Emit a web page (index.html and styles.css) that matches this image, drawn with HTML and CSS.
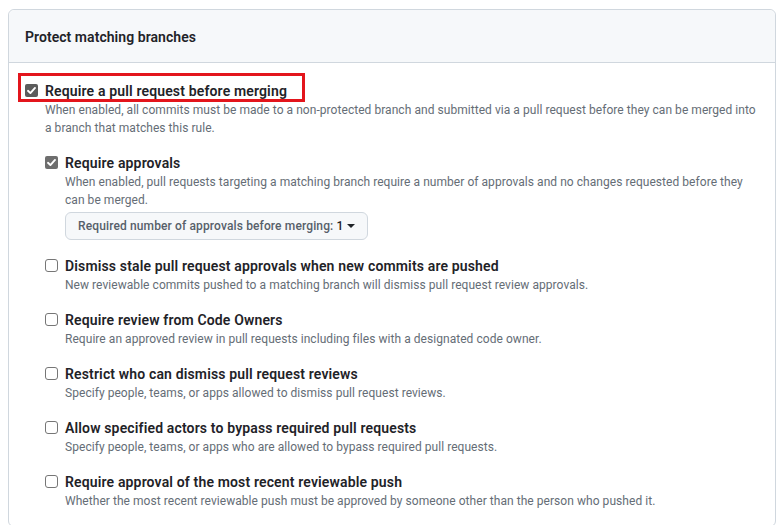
FILE: index.html
```
<!DOCTYPE html>
<html lang="en">
<head>
<meta charset="utf-8">
<title>Protect matching branches</title>
<link rel="stylesheet" href="styles.css">
</head>
<body>
<div class="box">
  <div class="box-header">
    <h3 class="box-title">Protect matching branches</h3>
  </div>
  <div class="box-body">
    <div class="check">
      <label class="check-label highlighted">
        <span class="cb cb-on"><svg viewBox="0 0 13 13" width="13" height="13"><rect x="0" y="0" width="13" height="13" rx="2" fill="#5c5c5c"/><path d="M3 6.8 L5.4 9.1 L10 3.9" fill="none" stroke="#fff" stroke-width="1.9" stroke-linecap="round" stroke-linejoin="round"/></svg></span>
        Require a pull request before merging
      </label>
      <p class="note">When enabled, all commits must be made to a non-protected branch and submitted via a pull request before they can be merged into a branch that matches this rule.</p>

      <div class="sub">
        <div class="check">
          <label class="check-label">
            <span class="cb cb-on"><svg viewBox="0 0 13 13" width="13" height="13"><rect x="0" y="0" width="13" height="13" rx="2" fill="#6e6e6e"/><path d="M3 6.8 L5.4 9.1 L10 3.9" fill="none" stroke="#fff" stroke-width="1.9" stroke-linecap="round" stroke-linejoin="round"/></svg></span>
            Require approvals
          </label>
          <p class="note">When enabled, pull requests targeting a matching branch require a number of approvals and no changes requested before they can be merged.</p>
          <button class="select-btn" type="button">Required number of approvals before merging: <span class="select-value">1</span><span class="caret"></span></button>
        </div>

        <div class="check">
          <label class="check-label"><span class="cb cb-off"></span>Dismiss stale pull request approvals when new commits are pushed</label>
          <p class="note">New reviewable commits pushed to a matching branch will dismiss pull request review approvals.</p>
        </div>

        <div class="check">
          <label class="check-label"><span class="cb cb-off"></span>Require review from Code Owners</label>
          <p class="note">Require an approved review in pull requests including files with a designated code owner.</p>
        </div>

        <div class="check">
          <label class="check-label"><span class="cb cb-off"></span>Restrict who can dismiss pull request reviews</label>
          <p class="note">Specify people, teams, or apps allowed to dismiss pull request reviews.</p>
        </div>

        <div class="check">
          <label class="check-label"><span class="cb cb-off"></span>Allow specified actors to bypass required pull requests</label>
          <p class="note">Specify people, teams, or apps who are allowed to bypass required pull requests.</p>
        </div>

        <div class="check">
          <label class="check-label"><span class="cb cb-off"></span>Require approval of the most recent reviewable push</label>
          <p class="note">Whether the most recent reviewable push must be approved by someone other than the person who pushed it.</p>
        </div>
      </div>
    </div>
  </div>
</div>
</body>
</html>
```
FILE: styles.css
```
html, body {
  margin: 0;
  padding: 0;
  background: #ffffff;
}

body {
  font-family: Roboto, "Liberation Sans", sans-serif;
  color: #1f2328;
  padding: 9px 3px 0 8px;
}

.box {
  width: 768px;
  box-sizing: border-box;
  border: 1px solid #d0d7de;
  border-radius: 6px;
  background: #ffffff;
}

.box-header {
  height: 53px;
  box-sizing: border-box;
  background: #f6f8fa;
  border-bottom: 1px solid #d0d7de;
  border-radius: 6px 6px 0 0;
  padding: 2px 16px 0 16px;
  display: flex;
  align-items: center;
}

.box-title {
  margin: 0;
  font-size: 14px;
  font-weight: 600;
  letter-spacing: 0.05px;
  color: #1f2328;
}

.box-body {
  padding: 18px 16px 16px 16px;
}

.check {
  padding-left: 20px;
}

.sub {
  margin-top: 16px;
}

.sub .check + .check {
  margin-top: 16px;
}

.check-label {
  position: relative;
  display: inline-block;
  font-size: 14px;
  font-weight: 600;
  line-height: 20px;
  letter-spacing: 0.15px;
  color: #1f2328;
}

.cb {
  position: absolute;
  left: -20px;
  top: 3px;
  width: 13px;
  height: 13px;
  box-sizing: border-box;
}

.cb svg {
  display: block;
}

.cb-off {
  border: 1px solid #767676;
  border-radius: 3px;
  background: #ffffff;
}

.highlighted::after {
  content: "";
  position: absolute;
  left: -27px;
  top: -8px;
  width: 287px;
  height: 29px;
  box-sizing: border-box;
  border: 3px solid #e3151c;
}

.note {
  margin: 0;
  font-size: 12px;
  line-height: 18px;
  letter-spacing: 0.05px;
  color: #656d76;
}

.select-btn {
  margin-top: 3px;
  height: 28px;
  box-sizing: border-box;
  padding: 0 12px;
  display: inline-flex;
  align-items: center;
  background: #f6f8fa;
  border: 1px solid #d0d7de;
  border-radius: 6px;
  font-family: Roboto, "Liberation Sans", sans-serif;
  font-size: 12px;
  font-weight: 500;
  letter-spacing: 0.13px;
  color: #57606a;
  white-space: pre;
}

.select-value {
  color: #1f2328;
}

.caret {
  display: inline-block;
  margin-left: 4px;
  width: 0;
  height: 0;
  border-left: 4px solid transparent;
  border-right: 4px solid transparent;
  border-top: 4px solid #1f2328;
}
```
